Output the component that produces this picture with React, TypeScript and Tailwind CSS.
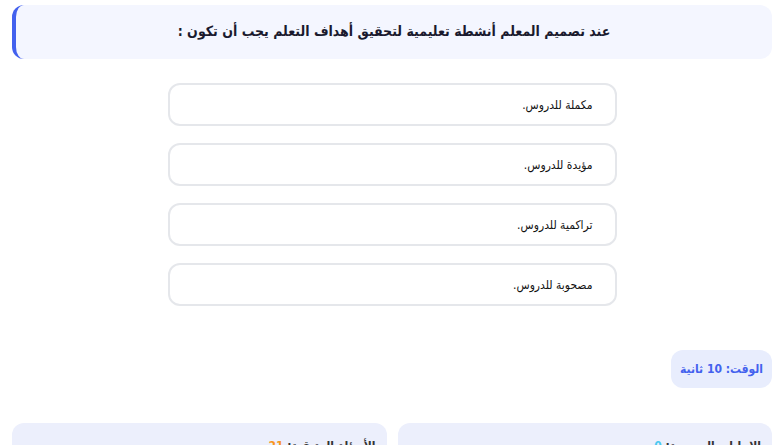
import React from "react";

const options = [
  "مكملة للدروس.",
  "مؤيدة للدروس.",
  "تراكمية للدروس.",
  "مصحوبة للدروس.",
];

export default function App() {
  return (
    <div
      dir="rtl"
      className="min-h-screen bg-white text-[#1f2937] px-3 pt-[5px] font-stretch-condensed"
      style={{ fontFamily: '"DejaVu Sans Condensed", "DejaVu Sans", "Liberation Sans", sans-serif' }}
    >
      <header className="h-[54px] rounded-xl border-l-4 border-[#4361ee] bg-[#f4f6ff] flex items-center justify-center pb-[3px]">
        <h1 className="text-sm font-bold text-[#1a1a2e]">
          عند تصميم المعلم أنشطة تعليمية لتحقيق أهداف التعلم يجب أن تكون :
        </h1>
      </header>

      <div className="mx-auto mt-[24px] w-[449px] flex flex-col gap-[17px]">
        {options.map((option) => (
          <button
            key={option}
            className="h-[43px] rounded-xl border-2 border-[#e5e7eb] bg-white px-[22px] text-right text-xs text-[#111]"
          >
            {option}
          </button>
        ))}
      </div>

      <div className="mt-[44px] flex">
        <div className="h-[38px] w-[101px] rounded-xl bg-[#e8edfd] flex items-center justify-center text-xs font-bold text-[#4361ee]">
          الوقت: 10 ثانية
        </div>
      </div>

      <div className="mt-[35px] grid grid-cols-2 gap-[11px]">
        <div className="h-[60px] rounded-xl bg-[#eceffc] px-[11px] pt-[15px] text-xs font-bold text-[#333]">
          الإجابات الصحيحة: <span className="text-[#4cc9f0]">0</span>
        </div>
        <div className="h-[60px] rounded-xl bg-[#eceffc] px-[11px] pt-[15px] text-xs font-bold text-[#333]">
          الأسئلة المتبقية: <span className="text-[#f8961e]">21</span>
        </div>
      </div>
    </div>
  );
}
